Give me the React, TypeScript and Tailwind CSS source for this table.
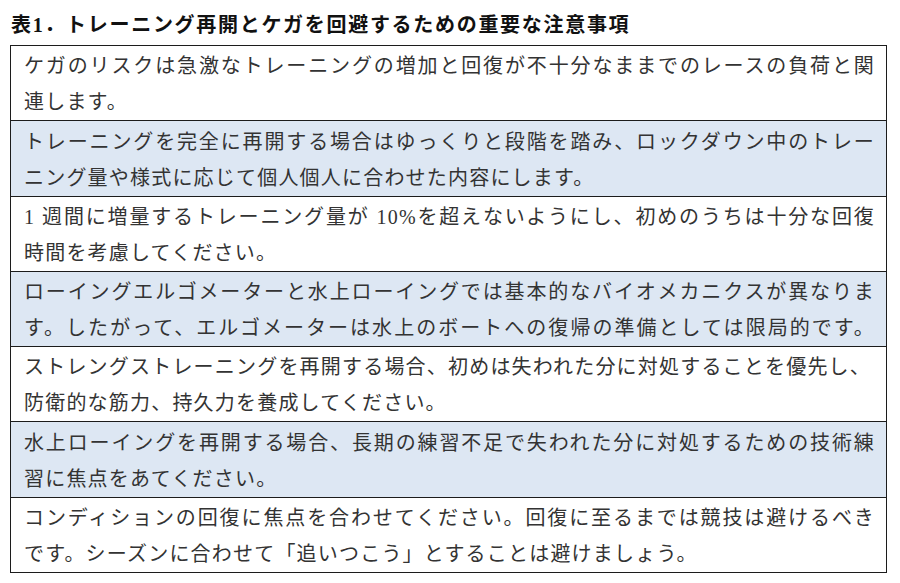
const rows: { lines: string[]; shaded: boolean }[] = [
  {
    lines: [
      "ケガのリスクは急激なトレーニングの増加と回復が不十分なままでのレースの負荷と関",
      "連します。",
    ],
    shaded: false,
  },
  {
    lines: [
      "トレーニングを完全に再開する場合はゆっくりと段階を踏み、ロックダウン中のトレー",
      "ニング量や様式に応じて個人個人に合わせた内容にします。",
    ],
    shaded: true,
  },
  {
    lines: [
      "1 週間に増量するトレーニング量が 10%を超えないようにし、初めのうちは十分な回復",
      "時間を考慮してください。",
    ],
    shaded: false,
  },
  {
    lines: [
      "ローイングエルゴメーターと水上ローイングでは基本的なバイオメカニクスが異なりま",
      "す。したがって、エルゴメーターは水上のボートへの復帰の準備としては限局的です。",
    ],
    shaded: true,
  },
  {
    lines: [
      "ストレングストレーニングを再開する場合、初めは失われた分に対処することを優先し、",
      "防衛的な筋力、持久力を養成してください。",
    ],
    shaded: false,
  },
  {
    lines: [
      "水上ローイングを再開する場合、長期の練習不足で失われた分に対処するための技術練",
      "習に焦点をあてください。",
    ],
    shaded: true,
  },
  {
    lines: [
      "コンディションの回復に焦点を合わせてください。回復に至るまでは競技は避けるべき",
      "です。シーズンに合わせて「追いつこう」とすることは避けましょう。",
    ],
    shaded: false,
  },
]

// full lines stretch across the cell, the last line of each row stays left
const fullLines = new Set([0, 1, 2, 3, 5, 6].map((i) => rows[i].lines[0]).concat([rows[3].lines[1]]))

export default function App() {
  return (
    <div className="w-[900px] h-[583px] bg-white font-['Liberation_Serif','Noto_Sans_CJK_JP',serif] text-[#333]">
      <div className="pt-[11px] pl-[11px] text-[20px] leading-[28px] font-bold tracking-[1.7px] text-[#111]">
        表1．トレーニング再開とケガを回避するための重要な注意事項
      </div>
      <div className="mt-[6px] ml-[10px] w-[877px] border-[1.5px] border-[#1c1c1c]">
        {rows.map((row, i) => (
          <div
            key={i}
            className={`pt-[2.3px] pl-[13px] pr-[11px] text-[20px] leading-[36px] tracking-[1.2px] ${
              row.shaded ? "bg-[#dde7f3]" : "bg-white"
            } ${i < rows.length - 1 ? "border-b-[1.5px] border-[#1c1c1c]" : ""}`}
          >
            {row.lines.map((line, j) => (
              <div
                key={j}
                className={`whitespace-nowrap ${
                  fullLines.has(line) ? "text-justify [text-align-last:justify]" : ""
                }`}
              >
                {line}
              </div>
            ))}
          </div>
        ))}
      </div>
    </div>
  )
}
